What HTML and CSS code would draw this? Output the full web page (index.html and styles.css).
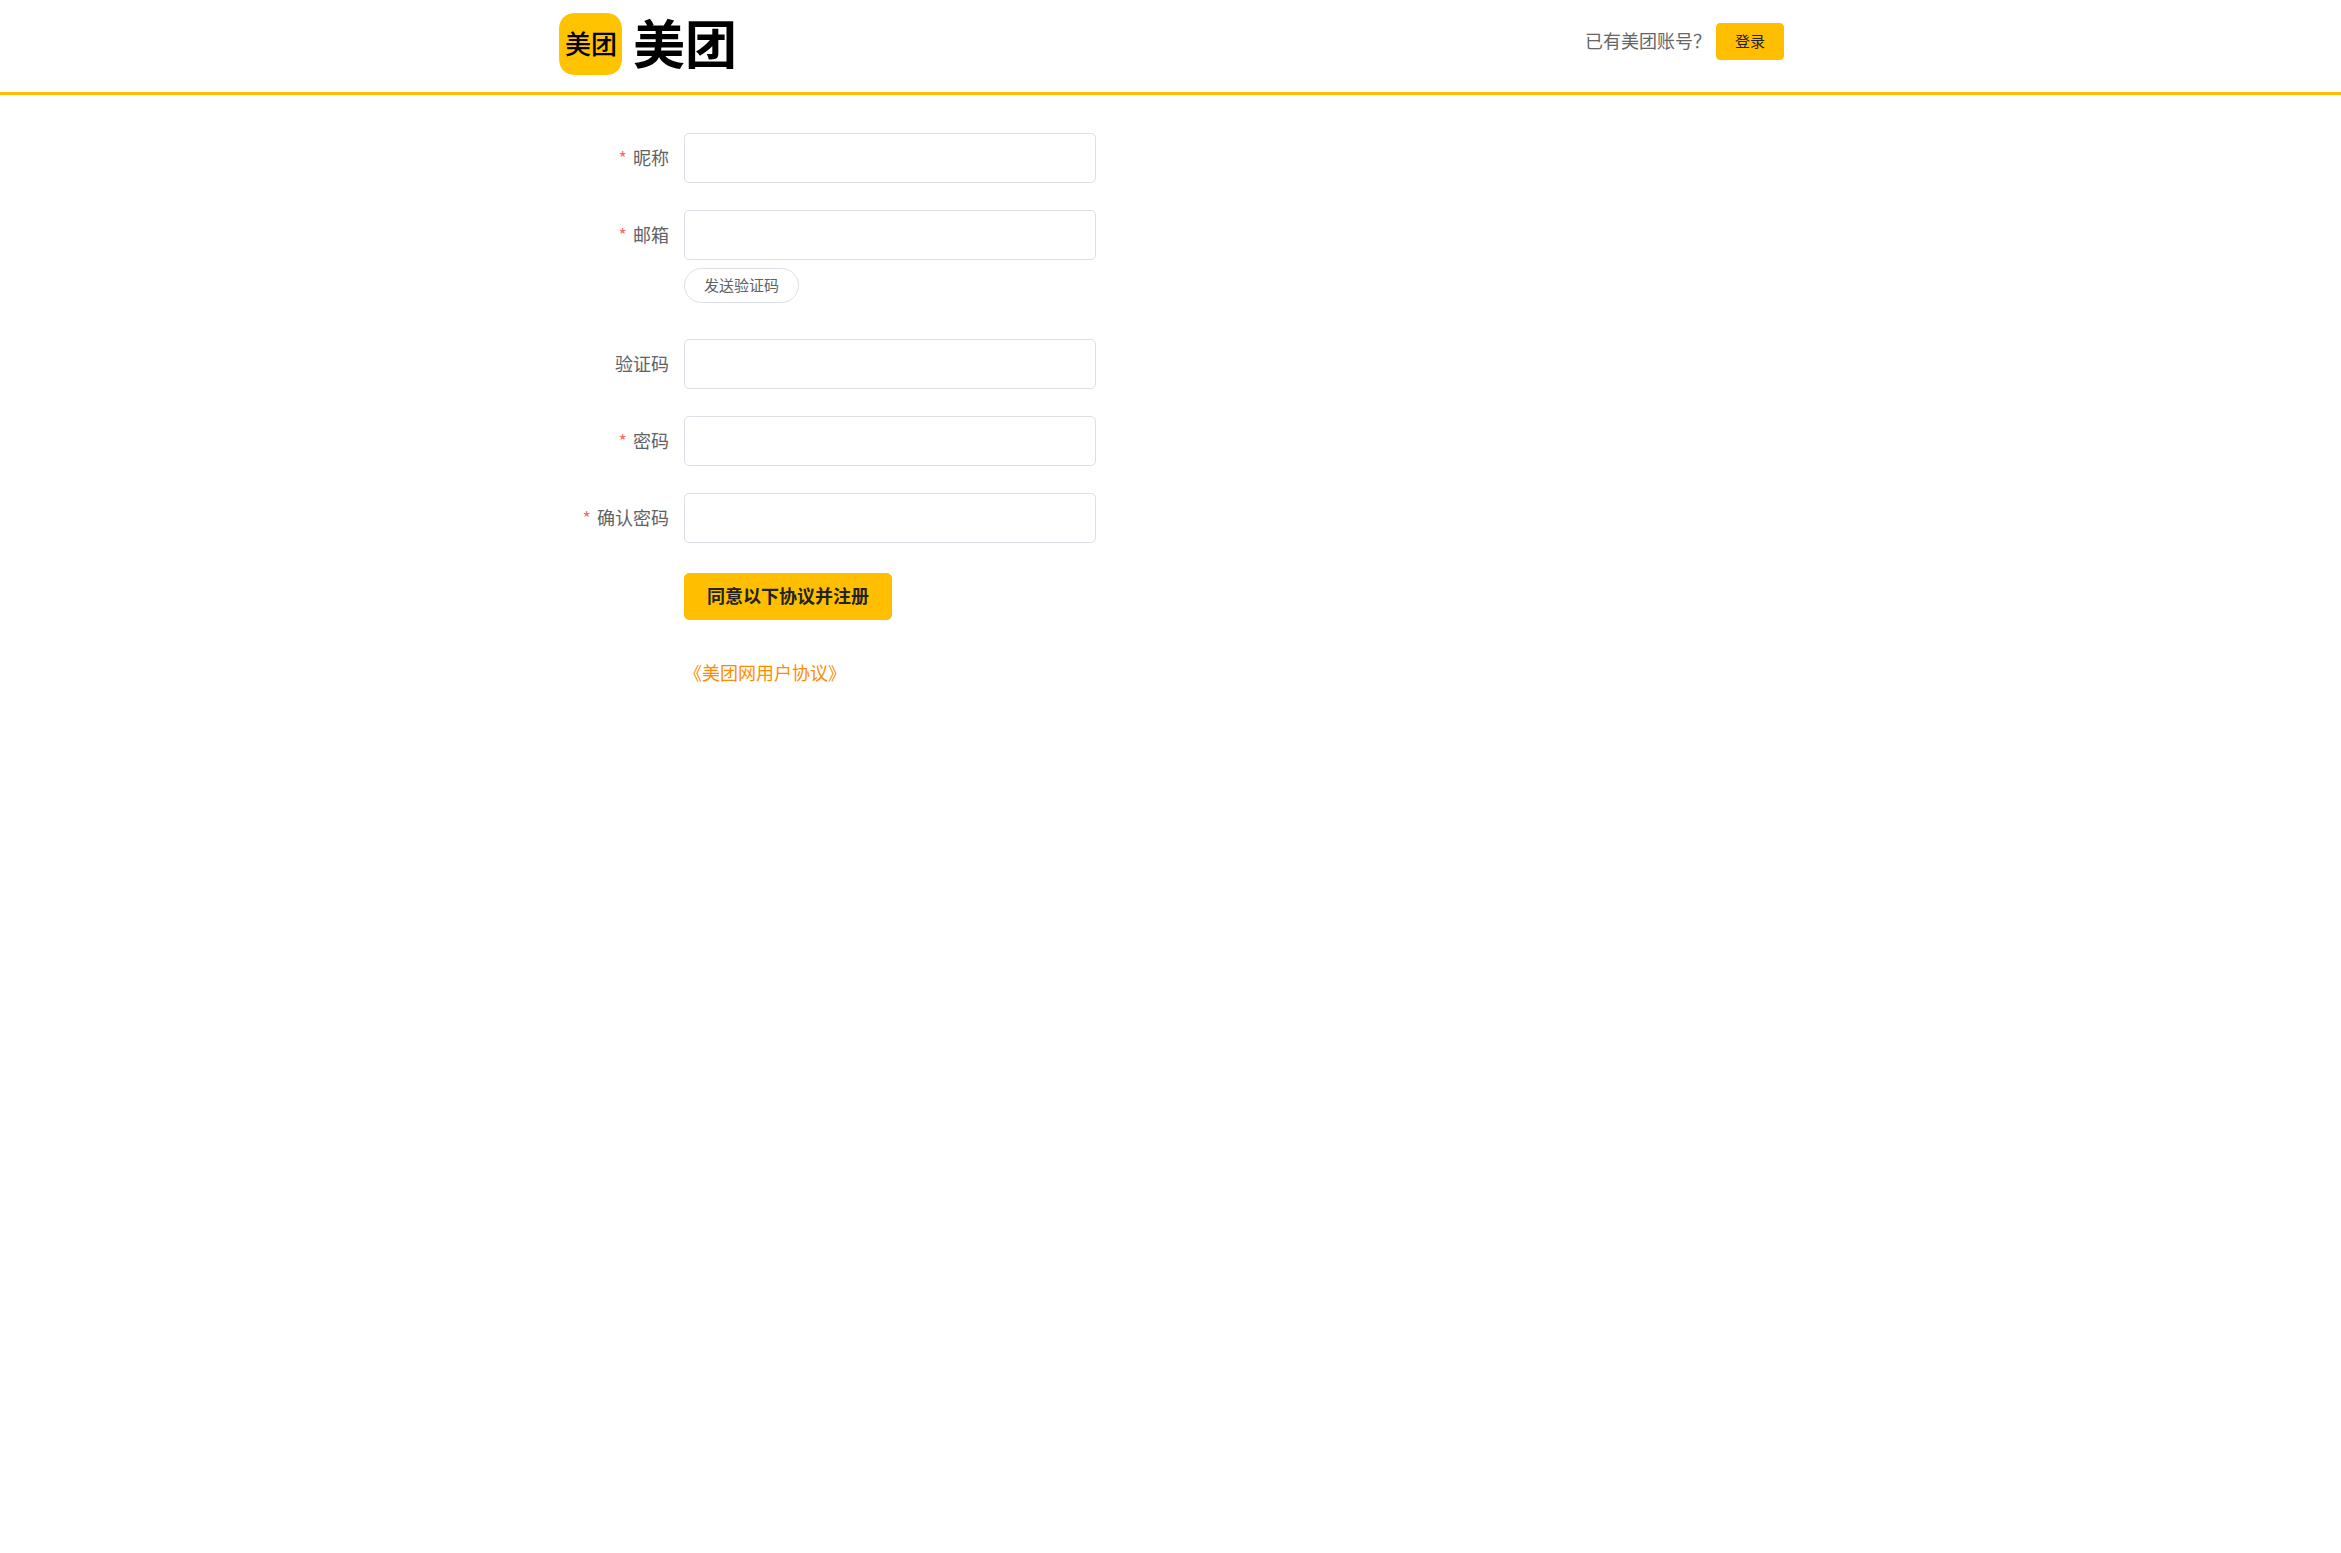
FILE: index.html
```html
<!DOCTYPE html>
<html lang="zh-CN">
<head>
<meta charset="utf-8">
<meta name="viewport" content="width=device-width, initial-scale=1">
<title>注册 - 美团</title>
<link rel="stylesheet" href="styles.css">
</head>
<body>
<header class="header">
  <div class="container header-inner">
    <a class="logo" href="#">
      <svg class="logo-image" viewBox="0 0 200 90" role="img" aria-label="美团">
        <path class="logo-tile" d="M19 13H48C59 13 65 19 65 30V58C65 69 59 75 48 75H19C8 75 2 69 2 58V30C2 19 8 13 19 13Z"/>
        <text class="logo-small" x="8" y="54">美团</text>
        <text class="logo-large" x="76" y="64">美团</text>
      </svg>
    </a>
    <div class="login">
      <span class="login-hint">已有美团账号？</span>
      <button class="button button-login" type="button">登录</button>
    </div>
  </div>
</header>
<main class="container">
  <form class="form">
    <div class="row">
      <label class="label required" for="name">昵称</label>
      <input class="input" id="name" type="text">
    </div>
    <div class="row row-email">
      <label class="label required" for="email">邮箱</label>
      <div class="field">
        <input class="input" id="email" type="email">
        <button class="button button-send" type="button">发送验证码</button>
      </div>
    </div>
    <div class="row">
      <label class="label" for="code">验证码</label>
      <input class="input" id="code" type="text">
    </div>
    <div class="row">
      <label class="label required" for="pwd">密码</label>
      <input class="input" id="pwd" type="password">
    </div>
    <div class="row">
      <label class="label required" for="cpwd">确认密码</label>
      <input class="input" id="cpwd" type="password">
    </div>
    <div class="row row-action row-submit">
      <button class="button button-submit" type="submit">同意以下协议并注册</button>
    </div>
    <div class="row row-action">
      <a class="agreement" href="#">《美团网用户协议》</a>
    </div>
  </form>
</main>
</body>
</html>
```
FILE: styles.css
```css
* {
  box-sizing: border-box;
}

body {
  margin: 0;
  background: #fff;
  color: #606266;
  font-family: "Noto Sans CJK SC", sans-serif;
  font-size: 18px;
}

.container {
  max-width: 1227px;
  margin: 0 auto;
}

.header {
  border-bottom: 3px solid #ffbf00;
}

.header-inner {
  display: flex;
  justify-content: space-between;
  align-items: flex-start;
  height: 92px;
}

.logo-image {
  display: block;
  width: 200px;
  height: 90px;
}

.logo-tile {
  fill: #ffc300;
}

.logo-small,
.logo-large {
  fill: #000;
}

.logo-small {
  font-size: 26px;
  font-weight: 500;
}

.logo-large {
  font-size: 52px;
  font-weight: 700;
}

.login {
  display: flex;
  align-items: flex-start;
  gap: 5px;
  margin-top: 23px;
}

.login-hint {
  color: #666;
  line-height: 34px;
}

.button {
  border: 1px solid #ffbf00;
  border-radius: 4px;
  background: #ffbf00;
  color: #222;
  font: inherit;
  cursor: pointer;
}

.button-login {
  height: 37px;
  padding: 0 18px 2px;
  font-size: 15px;
  line-height: 33px;
}

.form {
  display: flex;
  flex-direction: column;
  gap: 27px;
  padding-top: 38px;
}

.row {
  display: flex;
  align-items: flex-start;
}

.row-email {
  min-height: 102px;
}

.row-action {
  padding-left: 127px;
}

.row-submit {
  padding-top: 3px;
}

.label {
  width: 127px;
  padding-right: 15px;
  line-height: 48px;
  text-align: right;
}

.required::before {
  content: "*";
  margin-right: 6px;
  color: #f56c6c;
}

.field {
  display: flex;
  flex-direction: column;
  align-items: flex-start;
  gap: 8px;
}

.input {
  width: 412px;
  height: 50px;
  padding: 0 18px;
  border: 1px solid #dcdfe6;
  border-radius: 5px;
  background: #fff;
  color: #606266;
  font: inherit;
}

.button-send {
  height: 35px;
  padding: 0 19px 2px;
  border-color: #dcdfe6;
  border-radius: 18px;
  background: #fff;
  color: #606266;
  font-size: 15px;
  line-height: 31px;
}

.button-submit {
  height: 47px;
  padding: 0 22px 2px;
  border-radius: 5px;
  font-weight: 700;
  line-height: 43px;
}

.agreement {
  color: #fe8c00;
  line-height: 50px;
  text-decoration: none;
}
```
